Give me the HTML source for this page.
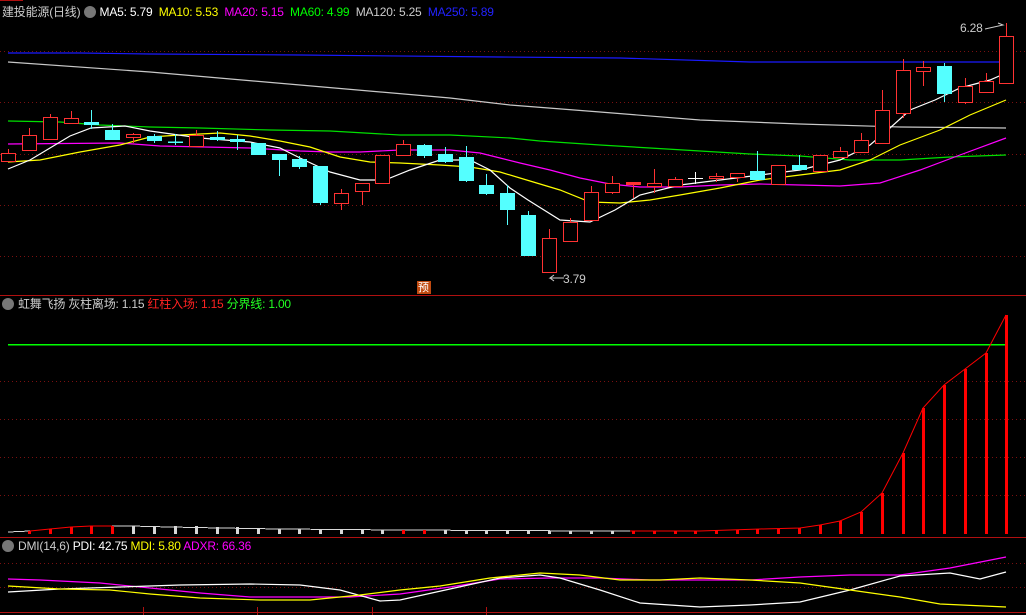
<!DOCTYPE html>
<html><head><meta charset="utf-8"><style>
body{margin:0;background:#000;width:1026px;height:615px;overflow:hidden;font-family:"Liberation Sans","Noto Sans CJK SC",sans-serif}
.t{position:absolute;font-size:12px;white-space:nowrap;line-height:14px;letter-spacing:-0.2px}
.i{display:inline-block;width:12px;height:12px;border-radius:6px;background:#777;vertical-align:-2px;margin-right:4px}
.r rect,.r line{stroke:#ff3232}
.r rect{fill:#000}
</style></head><body>
<svg width="1026" height="615" style="position:absolute;left:0;top:0" shape-rendering="crispEdges">
<g stroke="#7a1010" stroke-dasharray="1,3">
<line x1="0" y1="51.5" x2="1026" y2="51.5"/><line x1="0" y1="102.5" x2="1026" y2="102.5"/><line x1="0" y1="154.5" x2="1026" y2="154.5"/><line x1="0" y1="205.5" x2="1026" y2="205.5"/><line x1="0" y1="256.5" x2="1026" y2="256.5"/>
<line x1="0" y1="381.5" x2="1026" y2="381.5"/><line x1="0" y1="419.5" x2="1026" y2="419.5"/><line x1="0" y1="457.5" x2="1026" y2="457.5"/><line x1="0" y1="495.5" x2="1026" y2="495.5"/>
<line x1="0" y1="563.5" x2="1026" y2="563.5"/><line x1="0" y1="587.5" x2="1026" y2="587.5"/>
</g>
<g stroke="#b01010"><line x1="0" y1="295.5" x2="1026" y2="295.5"/><line x1="0" y1="537.5" x2="1026" y2="537.5"/><line x1="0" y1="612.5" x2="1026" y2="612.5"/><line x1="0" y1="0.5" x2="23" y2="0.5"/></g>
<g fill="none" shape-rendering="auto" stroke-width="1.2">
<polyline stroke="#c8c8c8" points="8,62 150,72 300,85 450,98 510,105 600,112 700,120 800,124 900,127 1006,128"/>
<polyline stroke="#1a1aff" points="8,53 80,53 150,54 300,55 500,57 620,58 750,62 1006,62"/>
<polyline stroke="#00e000" points="8,121 60,122 100,125 150,127 200,128 270,130 330,131 400,135 450,135 510,138 540,141 600,145 650,148 700,151 750,154 800,156 850,160 900,160 950,157 1006,155"/>
<polyline stroke="#ff00ff" points="8,144 120,143 160,146 250,148 300,151 330,152 360,152 400,150 450,150 480,153 500,158 520,163 550,170 580,178 610,184 640,187 680,187 720,185 760,184 800,185 840,186 880,183 920,170 960,155 1006,138"/>
<polyline stroke="#ffff00" points="8,162 40,160 80,152 120,145 150,137 180,135 220,133 250,136 280,141 310,147 340,157 370,162 400,163 440,165 470,167 500,172 520,178 560,190 590,202 620,203 650,200 680,195 720,188 760,180 800,175 840,170 870,160 900,145 940,130 970,115 1006,100"/>
<polyline stroke="#ffffff" points="8,169 30,160 50,148 70,136 91,128 125,126 150,131 200,138 250,142 280,148 300,158 330,172 360,180 385,180 410,170 440,160 470,160 490,170 510,188 528,200 560,220 590,222 615,210 640,195 680,185 720,180 760,175 800,170 840,160 870,145 890,128 910,110 935,100 960,88 990,80 1006,73"/>
</g>
<g class="r" stroke="#ff3232" fill="#000">
<line x1="8.5" y1="149" x2="8.5" y2="161"/><rect x="1.5" y="153.5" width="14" height="8"/>
<line x1="29.5" y1="128" x2="29.5" y2="150"/><rect x="22.5" y="135.5" width="14" height="15"/>
<line x1="50.5" y1="114" x2="50.5" y2="139"/><rect x="43.5" y="117.5" width="14" height="22"/>
<line x1="71.5" y1="111" x2="71.5" y2="123"/><rect x="64.5" y="118.5" width="14" height="5"/>
<line x1="133.5" y1="133" x2="133.5" y2="143"/><rect x="126.5" y="134.5" width="14" height="3"/>
<line x1="196.5" y1="130" x2="196.5" y2="146"/><rect x="189.5" y="135.5" width="14" height="11"/>
<line x1="341.5" y1="189" x2="341.5" y2="210"/><rect x="334.5" y="193.5" width="14" height="10"/>
<line x1="362.5" y1="183" x2="362.5" y2="205"/><rect x="355.5" y="183.5" width="14" height="8"/>
<rect x="375.5" y="155.5" width="14" height="28"/>
<line x1="403.5" y1="140" x2="403.5" y2="155"/><rect x="396.5" y="144.5" width="14" height="11"/>
<line x1="549.5" y1="229" x2="549.5" y2="272"/><rect x="542.5" y="238.5" width="14" height="34"/>
<line x1="570.5" y1="218" x2="570.5" y2="241"/><rect x="563.5" y="222.5" width="14" height="19"/>
<line x1="591.5" y1="186" x2="591.5" y2="220"/><rect x="584.5" y="192.5" width="14" height="28"/>
<line x1="612.5" y1="176" x2="612.5" y2="194"/><rect x="605.5" y="183.5" width="14" height="9"/>
<line x1="633.5" y1="182" x2="633.5" y2="198"/><rect x="626.5" y="182.5" width="14" height="2" style="fill:#ff3232"/>
<line x1="654.5" y1="169" x2="654.5" y2="193"/><rect x="647.5" y="183.5" width="14" height="3"/>
<line x1="675.5" y1="177" x2="675.5" y2="186"/><rect x="668.5" y="179.5" width="14" height="7"/>
<line x1="716.5" y1="173" x2="716.5" y2="182"/><rect x="709.5" y="176.5" width="14" height="2"/>
<line x1="737.5" y1="173" x2="737.5" y2="182"/><rect x="730.5" y="173.5" width="14" height="4"/>
<rect x="771.5" y="165.5" width="14" height="19"/>
<rect x="813.5" y="155.5" width="14" height="16"/>
<line x1="840.5" y1="147" x2="840.5" y2="157"/><rect x="833.5" y="151.5" width="14" height="6"/>
<line x1="861.5" y1="133" x2="861.5" y2="152"/><rect x="854.5" y="140.5" width="14" height="12"/>
<line x1="882.5" y1="90" x2="882.5" y2="143"/><rect x="875.5" y="110.5" width="14" height="33"/>
<line x1="903.5" y1="59" x2="903.5" y2="118"/><rect x="896.5" y="70.5" width="14" height="43"/>
<line x1="923.5" y1="61" x2="923.5" y2="86"/><rect x="916.5" y="67.5" width="14" height="4"/>
<line x1="965.5" y1="78" x2="965.5" y2="104"/><rect x="958.5" y="86.5" width="14" height="16"/>
<line x1="986.5" y1="73" x2="986.5" y2="92"/><rect x="979.5" y="81.5" width="14" height="11"/>
<line x1="1006.5" y1="23" x2="1006.5" y2="83"/><rect x="999.5" y="36.5" width="14" height="47"/>
</g>
<g stroke="#54ffff" fill="#54ffff">
<line x1="91.5" y1="110" x2="91.5" y2="129"/><rect x="84.5" y="122.5" width="14" height="2"/>
<line x1="112.5" y1="124" x2="112.5" y2="139"/><rect x="105.5" y="130.5" width="14" height="9"/>
<line x1="154.5" y1="134" x2="154.5" y2="143"/><rect x="147.5" y="136.5" width="14" height="4"/>
<line x1="175.5" y1="134" x2="175.5" y2="145"/><rect x="168.5" y="142" width="14" height="0.5"/>
<line x1="217.5" y1="131" x2="217.5" y2="141"/><rect x="210.5" y="137.5" width="14" height="2"/>
<line x1="237.5" y1="135" x2="237.5" y2="150"/><rect x="230.5" y="139.5" width="14" height="2"/>
<rect x="251.5" y="143.5" width="14" height="11"/>
<line x1="279.5" y1="154" x2="279.5" y2="176"/><rect x="272.5" y="154.5" width="14" height="5"/>
<line x1="299.5" y1="156" x2="299.5" y2="169"/><rect x="292.5" y="159.5" width="14" height="7"/>
<line x1="320.5" y1="166" x2="320.5" y2="205"/><rect x="313.5" y="166.5" width="14" height="36"/>
<line x1="424.5" y1="144" x2="424.5" y2="158"/><rect x="417.5" y="145.5" width="14" height="10"/>
<line x1="445.5" y1="147" x2="445.5" y2="163"/><rect x="438.5" y="154.5" width="14" height="7"/>
<line x1="466.5" y1="146" x2="466.5" y2="182"/><rect x="459.5" y="157.5" width="14" height="23"/>
<line x1="486.5" y1="174" x2="486.5" y2="195"/><rect x="479.5" y="185.5" width="14" height="8"/>
<line x1="507.5" y1="185" x2="507.5" y2="225"/><rect x="500.5" y="193.5" width="14" height="16"/>
<line x1="528.5" y1="211" x2="528.5" y2="255"/><rect x="521.5" y="215.5" width="14" height="40"/>
<line x1="757.5" y1="151" x2="757.5" y2="179"/><rect x="750.5" y="171.5" width="14" height="8"/>
<line x1="799.5" y1="155" x2="799.5" y2="169"/><rect x="792.5" y="165.5" width="14" height="4"/>
<line x1="944.5" y1="63" x2="944.5" y2="102"/><rect x="937.5" y="66.5" width="14" height="27"/>
</g>
<g stroke="#fff"><line x1="695.5" y1="172" x2="695.5" y2="184"/><line x1="688" y1="178.5" x2="703" y2="178.5"/></g>
<g stroke="#ccc" fill="none" shape-rendering="auto"><polyline points="564,278 550,278 554,275"/><line x1="550" y1="278" x2="554" y2="281"/><polyline points="985,29 1003,25 998,23"/></g>
<rect x="417" y="281" width="14" height="13" fill="#c04a10"/>
<line x1="8" y1="344.5" x2="1006" y2="344.5" stroke="#00ff00" stroke-width="1.5"/>
<g stroke="#d8d8d8"><polyline fill="none" points="8,532 30,531" />
<polyline fill="none" points="112,526 130,526 170,527 220,528 280,529 400,530 600,531 630,531"/>
<g stroke-width="3"><line x1="133.5" y1="526" x2="133.5" y2="534"/><line x1="154.5" y1="526" x2="154.5" y2="534"/><line x1="175.5" y1="526" x2="175.5" y2="534"/><line x1="196.5" y1="526" x2="196.5" y2="534"/><line x1="217.5" y1="527" x2="217.5" y2="534"/><line x1="237.5" y1="527" x2="237.5" y2="534"/><line x1="258.5" y1="528" x2="258.5" y2="534"/><line x1="279.5" y1="529" x2="279.5" y2="534"/><line x1="299.5" y1="529" x2="299.5" y2="534"/><line x1="320.5" y1="529" x2="320.5" y2="534"/><line x1="341.5" y1="530" x2="341.5" y2="534"/><line x1="362.5" y1="530" x2="362.5" y2="534"/><line x1="382.5" y1="530" x2="382.5" y2="534"/><line x1="445.5" y1="530" x2="445.5" y2="534"/><line x1="466.5" y1="530" x2="466.5" y2="534"/><line x1="486.5" y1="531" x2="486.5" y2="534"/><line x1="507.5" y1="531" x2="507.5" y2="534"/><line x1="528.5" y1="531" x2="528.5" y2="534"/><line x1="549.5" y1="531" x2="549.5" y2="534"/><line x1="570.5" y1="531" x2="570.5" y2="534"/><line x1="591.5" y1="531" x2="591.5" y2="534"/><line x1="612.5" y1="531" x2="612.5" y2="534"/></g></g>
<g stroke="#ff0000"><polyline fill="none" shape-rendering="auto" points="30,531 50,529 71,527 91,526 112,526"/><polyline fill="none" shape-rendering="auto" points="630,531 700,531 760,529 800,528 820,525 840,521 861,512 882,493 903,453 923,408 944,385 965,369 986,353 1006,315"/>
<g stroke-width="3"><line x1="29.5" y1="531" x2="29.5" y2="534"/><line x1="50.5" y1="529" x2="50.5" y2="534"/><line x1="71.5" y1="527" x2="71.5" y2="534"/><line x1="91.5" y1="526" x2="91.5" y2="534"/><line x1="112.5" y1="526" x2="112.5" y2="534"/><line x1="403.5" y1="530" x2="403.5" y2="534"/><line x1="424.5" y1="530" x2="424.5" y2="534"/><line x1="633.5" y1="531" x2="633.5" y2="534"/><line x1="654.5" y1="531" x2="654.5" y2="534"/><line x1="675.5" y1="531" x2="675.5" y2="534"/><line x1="695.5" y1="531" x2="695.5" y2="534"/><line x1="716.5" y1="530" x2="716.5" y2="534"/><line x1="737.5" y1="530" x2="737.5" y2="534"/><line x1="757.5" y1="529" x2="757.5" y2="534"/><line x1="778.5" y1="529" x2="778.5" y2="534"/><line x1="799.5" y1="528" x2="799.5" y2="534"/><line x1="820.5" y1="525" x2="820.5" y2="534"/><line x1="840.5" y1="521" x2="840.5" y2="534"/><line x1="861.5" y1="512" x2="861.5" y2="534"/><line x1="882.5" y1="493" x2="882.5" y2="534"/><line x1="903.5" y1="453" x2="903.5" y2="534"/><line x1="923.5" y1="408" x2="923.5" y2="534"/><line x1="944.5" y1="385" x2="944.5" y2="534"/><line x1="965.5" y1="369" x2="965.5" y2="534"/><line x1="986.5" y1="353" x2="986.5" y2="534"/><line x1="1006.5" y1="315" x2="1006.5" y2="534"/></g></g>
<g fill="none" shape-rendering="auto" stroke-width="1.2">
<polyline stroke="#ff00ff" points="8,579 40,580 100,583 150,588 200,593 250,597 300,597 350,597 400,594 450,587 500,579 550,578 600,578 650,580 700,580 750,580 800,577 850,575 900,575 950,568 1006,557"/>
<polyline stroke="#ffffff" points="8,592 60,589 120,587 180,585 250,584 300,585 340,590 380,601 400,600 450,589 500,578 540,575 560,578 600,590 640,603 700,607 750,605 800,602 850,590 900,576 950,573 980,579 1006,572"/>
<polyline stroke="#ffff00" points="8,586 60,589 110,590 150,594 200,598 260,600 310,600 360,595 400,590 440,586 490,578 540,573 580,575 620,580 660,580 700,578 750,580 800,583 850,590 900,597 940,604 1006,607"/>
</g>
<g stroke="#b01010"><line x1="143.5" y1="607" x2="143.5" y2="615"/><line x1="257.5" y1="607" x2="257.5" y2="615"/><line x1="372.5" y1="607" x2="372.5" y2="615"/><line x1="486.5" y1="607" x2="486.5" y2="615"/></g>
</svg>
<div class="t" style="left:2px;top:5px;color:#ccc">建投能源(日线) <span class="i"></span><span style="color:#fff">MA5: 5.79</span> &nbsp;<span style="color:#ff0">MA10: 5.53</span> &nbsp;<span style="color:#f0f">MA20: 5.15</span> &nbsp;<span style="color:#0f0">MA60: 4.99</span> &nbsp;<span style="color:#ccc">MA120: 5.25</span> &nbsp;<span style="color:#22f">MA250: 5.89</span></div>
<div class="t" style="left:960px;top:21px;color:#ccc">6.28</div>
<div class="t" style="left:563px;top:272px;color:#ccc">3.79</div>
<div class="t" style="left:418px;top:281px;color:#fff;font-size:11px">预</div>
<div class="t" style="left:2px;top:297px;color:#ccc"><span class="i"></span>虹舞飞扬 灰柱离场: 1.15 <span style="color:#f22">红柱入场: 1.15</span> <span style="color:#2f2">分界线: 1.00</span></div>
<div class="t" style="left:2px;top:539px;color:#ccc"><span class="i"></span>DMI(14,6) <span style="color:#fff">PDI: 42.75</span> <span style="color:#ff0">MDI: 5.80</span> <span style="color:#f0f">ADXR: 66.36</span></div>
</body></html>
